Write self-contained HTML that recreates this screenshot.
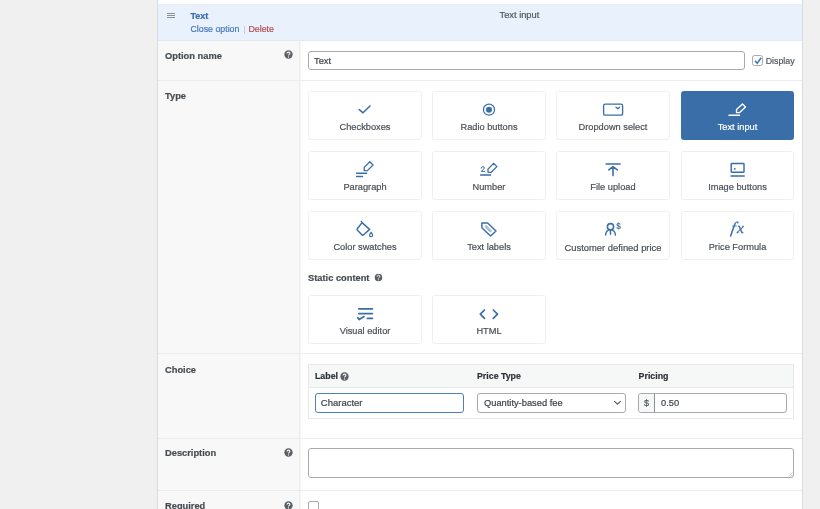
<!DOCTYPE html>
<html><head><meta charset="utf-8">
<style>
*{box-sizing:border-box;margin:0;padding:0}
html,body{width:820px;height:509px;overflow:hidden;background:#f0f0f1;font-family:"Liberation Sans",sans-serif;color:#3c434a}
.abs{position:absolute}
#panel{position:absolute;left:157px;top:0;width:646px;height:509px;background:#fff;border-left:1px solid #dcdcde;border-right:1px solid #dcdcde}
#hdr{position:absolute;left:158px;top:4px;width:644px;height:37px;background:#e9f2fc;border-top:1px solid #eceef1;border-bottom:1px solid #e6e9ed}
.lab{position:absolute;left:158px;width:142px;background:#f8f8f8;border-right:1px solid #ededed;box-shadow:1px 0 0 #f6f6f6}
.sep{position:absolute;left:158px;width:644px;height:1px;background:#ececec}
.lt{position:absolute;left:165px;font-weight:bold;font-size:9.3px;color:#464c52}
.help{position:absolute;width:9px;height:9px;border-radius:50%;background:#555a5f;color:#fff;font-size:7px;font-weight:bold;text-align:center;line-height:9px}
.card{position:absolute;width:113px;height:49px;border:1px solid #efefef;border-radius:2.5px;background:#fff;text-align:center}
.card .t{position:absolute;left:0;right:0;top:30px;font-size:9.25px;color:#4a5056;white-space:nowrap}
.card svg{position:absolute;left:50%;top:11px;transform:translateX(-50%)}
.card.sel{background:#3a6ea9;border-color:#3a6ea9}
.card.sel .t{color:#fff}
input{font-family:"Liberation Sans",sans-serif}
.inp{position:absolute;background:#fff;border:1px solid #a7aaad;border-radius:3px;font-size:9.3px;color:#3c434a;padding-left:6px}
</style></head><body><div id="root" style="position:absolute;left:0;top:0;width:820px;height:509px;will-change:transform;-webkit-text-stroke:0.2px currentColor">
<div id="panel"></div>
<div id="hdr"></div>
<!-- hamburger -->
<div class="abs" style="left:167px;top:13px;width:8px;height:1px;background:#8c8f94"></div>
<div class="abs" style="left:167px;top:15px;width:8px;height:1px;background:#8c8f94"></div>
<div class="abs" style="left:167px;top:17px;width:8px;height:1px;background:#8c8f94"></div>
<div class="abs" style="left:190.5px;top:10.5px;font-size:9px;font-weight:bold;color:#3a6dae">Text</div>
<div class="abs" style="left:190.5px;top:23.5px;font-size:8.8px;color:#4677b8">Close option</div>
<div class="abs" style="left:243.5px;top:26px;width:1px;height:8px;background:#c8ccd2"></div>
<div class="abs" style="left:248.5px;top:23.5px;font-size:8.8px;color:#b54a4b">Delete</div>
<div class="abs" style="left:499.5px;top:10.3px;font-size:9.3px;color:#50575e">Text input</div>

<!-- label column rows -->
<div class="lab" style="top:41px;height:39px"></div>
<div class="sep" style="top:80px"></div>
<div class="lab" style="top:81px;height:272px"></div>
<div class="sep" style="top:353px"></div>
<div class="lab" style="top:354px;height:84px"></div>
<div class="sep" style="top:438px"></div>
<div class="lab" style="top:439px;height:51px"></div>
<div class="sep" style="top:490px"></div>
<div class="lab" style="top:491px;height:18px"></div>

<div class="lt" style="top:50.8px">Option name</div>
<svg class="abs" style="left:284px;top:50.4px" width="9" height="9" viewBox="0 0 9 9"><circle cx="4.5" cy="4.5" r="4.15" fill="#5b6065"/><path d="M3.05 3.6 Q3.1 2.1 4.5 2.1 Q5.95 2.1 5.95 3.35 Q5.95 4.15 5 4.6 Q4.5 4.85 4.5 5.5" fill="none" stroke="#fff" stroke-width="1.05"/><circle cx="4.5" cy="6.95" r="0.62" fill="#fff"/></svg>
<div class="lt" style="top:91px">Type</div>
<div class="lt" style="top:364.5px">Choice</div>
<div class="lt" style="top:448px">Description</div>
<svg class="abs" style="left:284px;top:448px" width="9" height="9" viewBox="0 0 9 9"><circle cx="4.5" cy="4.5" r="4.15" fill="#5b6065"/><path d="M3.05 3.6 Q3.1 2.1 4.5 2.1 Q5.95 2.1 5.95 3.35 Q5.95 4.15 5 4.6 Q4.5 4.85 4.5 5.5" fill="none" stroke="#fff" stroke-width="1.05"/><circle cx="4.5" cy="6.95" r="0.62" fill="#fff"/></svg>
<div class="lt" style="top:501px">Required</div>
<svg class="abs" style="left:284px;top:501px" width="9" height="9" viewBox="0 0 9 9"><circle cx="4.5" cy="4.5" r="4.15" fill="#5b6065"/><path d="M3.05 3.6 Q3.1 2.1 4.5 2.1 Q5.95 2.1 5.95 3.35 Q5.95 4.15 5 4.6 Q4.5 4.85 4.5 5.5" fill="none" stroke="#fff" stroke-width="1.05"/><circle cx="4.5" cy="6.95" r="0.62" fill="#fff"/></svg>


<!-- choice table -->
<div class="abs" style="left:308px;top:364px;width:486px;height:55px;border:1px solid #e8e8e8;background:#fff"></div>
<div class="abs" style="left:309px;top:365px;width:484px;height:23px;background:#f6f7f7;border-bottom:1px solid #e8e8e8"></div>
<div class="abs" style="left:315px;top:371.3px;font-size:8.8px;font-weight:bold;color:#2c3338">Label</div>
<svg class="abs" style="left:340px;top:371.5px" width="9" height="9" viewBox="0 0 9 9"><circle cx="4.5" cy="4.5" r="4.15" fill="#5b6065"/><path d="M3.05 3.6 Q3.1 2.1 4.5 2.1 Q5.95 2.1 5.95 3.35 Q5.95 4.15 5 4.6 Q4.5 4.85 4.5 5.5" fill="none" stroke="#fff" stroke-width="1.05"/><circle cx="4.5" cy="6.95" r="0.62" fill="#fff"/></svg>
<div class="abs" style="left:477px;top:371px;font-size:8.8px;font-weight:bold;color:#2c3338">Price Type</div>
<div class="abs" style="left:638.6px;top:371px;font-size:8.8px;font-weight:bold;color:#2c3338">Pricing</div>
<div class="inp" style="left:314.5px;top:392.5px;width:149.5px;height:20.2px;line-height:17.6px;border:1.8px solid #4a7fc0;padding-left:5.3px;font-size:9.5px;padding-top:0.6px">Character</div>
<div class="inp" style="left:477px;top:393px;width:149px;height:20px;line-height:18px">Quantity-based fee</div>
<svg class="abs" style="left:612.5px;top:400px" width="9" height="6" viewBox="0 0 9 6"><path d="M1.3 1.2 L4.5 4.2 L7.7 1.2" fill="none" stroke="#50575e" stroke-width="1.1"/></svg>
<div class="inp" style="left:638px;top:393px;width:149px;height:20px;line-height:18px;padding-left:0">
 <div style="position:absolute;left:0;top:0;width:16px;height:18px;background:#f6f7f7;border-right:1px solid #8c8f94;border-radius:3px 0 0 3px;text-align:center;color:#50575e;font-size:9px">$</div>
 <div style="position:absolute;left:22px;top:0">0.50</div>
</div>

<!-- description -->
<div class="abs" style="left:308px;top:448px;width:486px;height:30px;border:1px solid #a7aaad;border-radius:3px;background:#fff"></div>
<svg class="abs" style="left:787px;top:471px" width="6" height="6" viewBox="0 0 6 6"><path d="M5.5 1.5 L1.5 5.5 M5.5 3.5 L3.5 5.5" stroke="#b5b8bb" stroke-width="0.7"/></svg>
<!-- required -->
<div class="abs" style="left:308px;top:501px;width:11px;height:11px;border:1px solid #a7aaad;border-radius:2px;background:#fff"></div>
<!-- option name input -->
<div class="inp" style="left:308px;top:50.6px;width:437px;height:19.5px;line-height:17.5px;padding-top:1.2px;padding-left:5px">Text</div>
<div class="abs" style="left:752px;top:55px;width:11px;height:11px;border:1px solid #a7aaad;border-radius:2.5px;background:#fff"></div>
<svg class="abs" style="left:752px;top:55px" width="11" height="11" viewBox="752 55 11 11"><path d="M755 60.8 L757.2 63.2 L761.2 57.8" fill="none" stroke="#3a78c0" stroke-width="1.6"/></svg>
<div class="abs" style="left:765.7px;top:55.9px;font-size:8.8px;color:#50575e">Display</div>

<!-- cards row 1 -->
<div class="card" style="left:308px;top:91px;width:114px"><div class="t">Checkboxes</div></div>
<div class="card" style="left:432px;top:91px;width:114px"><div class="t">Radio buttons</div></div>
<div class="card" style="left:556px;top:91px;width:114px"><div class="t">Dropdown select</div></div>
<div class="card sel" style="left:681px;top:91px"><div class="t">Text input</div></div>
<div class="card" style="left:308px;top:151px;width:114px"><div class="t">Paragraph</div></div>
<div class="card" style="left:432px;top:151px;width:114px"><div class="t">Number</div></div>
<div class="card" style="left:556px;top:151px;width:114px"><div class="t">File upload</div></div>
<div class="card" style="left:681px;top:151px"><div class="t">Image buttons</div></div>
<div class="card" style="left:308px;top:211px;width:114px"><div class="t">Color swatches</div></div>
<div class="card" style="left:432px;top:211px;width:114px"><div class="t">Text labels</div></div>
<div class="card" style="left:556px;top:211px;width:114px"><div class="t" style="font-size:9.4px">Customer defined price</div></div>
<div class="card" style="left:681px;top:211px"><div class="t">Price Formula</div></div>

<div class="abs" style="left:308px;top:272.8px;font-size:9.3px;font-weight:bold;color:#464c52">Static content</div>
<svg class="abs" style="left:374.2px;top:273px;transform:scale(0.92)" width="9" height="9" viewBox="0 0 9 9"><circle cx="4.5" cy="4.5" r="4.15" fill="#5b6065"/><path d="M3.05 3.6 Q3.1 2.1 4.5 2.1 Q5.95 2.1 5.95 3.35 Q5.95 4.15 5 4.6 Q4.5 4.85 4.5 5.5" fill="none" stroke="#fff" stroke-width="1.05"/><circle cx="4.5" cy="6.95" r="0.62" fill="#fff"/></svg>
<div class="card" style="left:308px;top:295px;width:114px"><div class="t">Visual editor</div></div>
<div class="card" style="left:432px;top:295px;width:114px"><div class="t">HTML</div></div>


<svg class="abs" style="left:0;top:0" width="820" height="509" viewBox="0 0 820 509" fill="none" stroke="#3a6ea9" stroke-width="1.57" stroke-linecap="round" stroke-linejoin="round">
<!-- checkmark -->
<path d="M359.3 109.6 L363 112.8 L370 106" stroke-width="1.55"/>
<!-- radio -->
<circle cx="489" cy="109.7" r="5.55" stroke-width="1.25"/>
<circle cx="489" cy="109.7" r="3" fill="#3a6ea9" stroke="none"/>
<!-- dropdown -->
<rect x="603.6" y="104.2" width="19" height="11" rx="1.5" stroke-width="1.34"/>
<path d="M616 107.2 L617.8 108.8 L619.6 107.2" stroke-width="1.23"/>
<!-- text input (white) -->
<g stroke="#fff">
<path d="M729 115.3 H739.5" stroke-width="1.46"/>
<path d="M736.5 112.6 L736.5 109.6 L742.5 104 L745.5 107 L739.6 112.6 Z" stroke-width="1.34"/>
</g>
<!-- paragraph -->
<path d="M356.6 173.2 H366.6 M356.6 176.6 H362.4" stroke-width="1.46"/>
<path d="M364.2 170.6 L364.2 167.4 L369.8 161.8 L373 165 L367.4 170.6 Z" stroke-width="1.34"/>
<!-- number -->
<path d="M481.2 168.1 Q481.5 166.7 482.9 166.7 Q484.4 166.8 484.3 168.1 Q484.2 169.1 481.2 171.4 H484.7" stroke-width="1"/>
<path d="M480.6 174.9 H490.6" stroke-width="1.46"/>
<path d="M488 172.3 L488 169.1 L493.7 163.4 L496.9 166.6 L491.2 172.3 Z" stroke-width="1.34"/>
<!-- file upload -->
<path d="M606.2 164 H620" stroke-width="1.68"/>
<path d="M613 175.6 V167 M608.8 169.8 L613 166.6 L617.3 169.8" stroke-width="1.57"/>
<!-- image buttons -->
<rect x="731.2" y="163.4" width="12.8" height="8.8" rx="0.6" stroke-width="1.46"/>
<circle cx="734.8" cy="168.9" r="0.9" fill="#3a6ea9" stroke="none"/>
<path d="M731 175.9 H744.2" stroke-width="1.46"/>
<!-- color swatches -->
<path d="M361.3 221.4 L362.3 222.8 M362 222.6 L369.6 229.4 L363.4 235 Q362.8 235.4 362.1 235 L357.2 230 Q356.8 229.3 357.3 228.7 Z" stroke-width="1.46"/>
<path d="M371.1 232.4 Q369.4 234.4 369.6 235.6 A1.55 1.55 0 0 0 372.6 235.6 Q372.8 234.4 371.1 232.4 Z" stroke-width="1.23"/>
<!-- text labels -->
<path d="M481.8 223 L487.6 223 L496 231 L490.6 236 L481.9 227.8 Z" stroke-width="1.46"/>
<path d="M486 226.5 L490.5 231" stroke="#a9c0dd" stroke-width="2.6"/>
<!-- customer defined price -->
<circle cx="610.5" cy="226.7" r="3.1" stroke-width="1.57"/>
<path d="M605.6 235 Q605.8 230.2 610.5 229.6 Q615.2 230.2 615.4 235 M610.5 229.8 V234.3" stroke-width="1.46"/>
<text x="616.3" y="229.4" font-family="Liberation Sans" font-weight="bold" font-size="8.3" fill="#3a6ea9" stroke="none">$</text>
<!-- fx -->
<g transform="translate(0 233) skewX(-10) translate(0 -233)"><text x="730.2" y="233" font-family="Liberation Serif" font-style="italic" font-size="16" fill="#3a6ea9" stroke="#3a6ea9" stroke-width="0.3">f</text></g><text x="736.9" y="232.8" font-family="Liberation Serif" font-style="italic" font-size="15.5" fill="#3a6ea9" stroke="#3a6ea9" stroke-width="0.3">x</text>
<!-- visual editor -->
<path d="M358.8 308.8 H372.4 M358.8 313.5 H372.4 M367.4 318.4 H372.4" stroke-width="1.75"/>
<path d="M357.8 317.7 L359.2 319.6 L364 316.6" stroke-width="1.75"/>
<!-- html -->
<path d="M484.5 310 L480.3 314.2 L484.5 318.4 M493.3 310 L497.5 314.2 L493.3 318.4" stroke-width="1.75"/>
</svg>
</div></body></html>
